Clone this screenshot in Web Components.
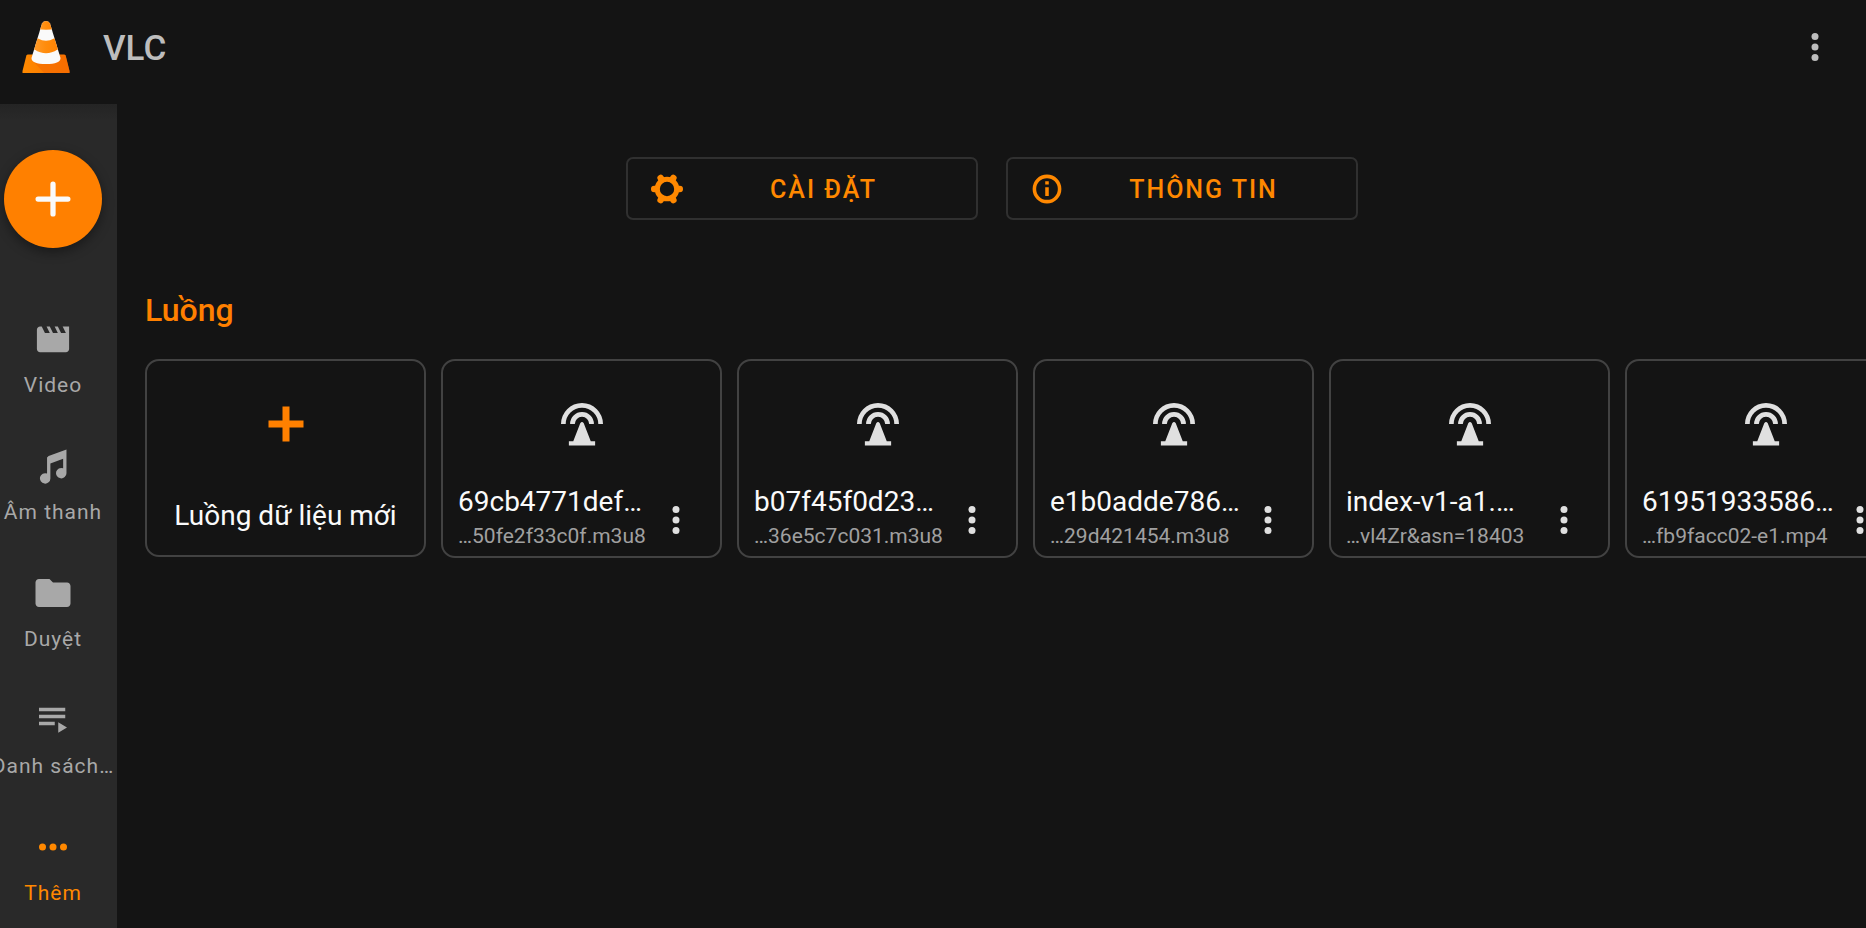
<!DOCTYPE html>
<html lang="vi">
<head>
<meta charset="utf-8">
<title>VLC</title>
<style>
  html, body { margin: 0; height: 100%; background: #141414; }
  body { font-family: Roboto, "Noto Sans", sans-serif; overflow: hidden; }
</style>
</head>
<body>
<vlc-app></vlc-app>
<script>
const ICONS = {
  dots: '<circle cx="12" cy="6" r="2"/><circle cx="12" cy="12" r="2"/><circle cx="12" cy="18" r="2"/>',
  more: '<circle cx="6" cy="12" r="2"/><circle cx="12" cy="12" r="2"/><circle cx="18" cy="12" r="2"/>',
  fab: '<path d="M12 3.500v17M3.500 12h17" fill="none" stroke="currentColor" stroke-width="3" stroke-linecap="round"/>',
  plus: '<path d="M10 2h4v8h8v4h-8v8h-4v-8H2v-4h8z"/>',
  video: '<path transform="translate(.96 1.2) scale(.92)" d="M18 4l2 4h-3l-2-4h-2l2 4h-3l-2-4H8l2 4H7L5 4H4c-1.100 0-2 .9-2 2v12c0 1.100.9 2 2 2h16c1.100 0 2-.9 2-2V4z"/>',
  audio: '<path d="M8.600 7.200v9.100a3 3 0 1 0 1.900 2.800V10.600l7.300-2.700v5.400a3 3 0 1 0 1.900 2.800V2.500L9.500 6.300z"/>',
  folder: '<path d="M10 4H4c-1.100 0-2 .9-2 2v12c0 1.100.9 2 2 2h16c1.100 0 2-.9 2-2V8c0-1.100-.9-2-2-2h-8z"/>',
  playlist: '<path d="M4 5h15v2H4zM4 9h15v2H4zM4 13h9v2H4zM15 13.300v6l5-3z"/>',
  gear: '<g fill="none" stroke="currentColor"><circle cx="12" cy="12" r="6.900" stroke-width="3.600"/><path stroke-width="4.600" stroke-linecap="round" d="M19.600 12h1.400M4.400 12H3M15.800 5.400l.7-1.200M8.200 5.400l-.7-1.200M15.800 18.600l.7 1.200M8.200 18.600l-.7 1.200"/></g>',
  info: '<g fill="none" stroke="currentColor" stroke-width="2.500"><circle cx="12" cy="12" r="8.900"/><path d="M12 6.500v2.400M12 10.700v6.300"/></g>',
  stream: '<path d="M0 12a12 12 0 0 1 24 0h-2.700a9.300 9.300 0 0 0-18.600 0zM5.200 12a6.800 6.800 0 0 1 13.600 0h-2.700a4.100 4.100 0 0 0-8.200 0zM11 11.500q1-1.200 2 0L17 21.900h2.500v2.400h-15v-2.400H7z"/>'
};

class VlcIcon extends HTMLElement {
  connectedCallback() {
    this.attachShadow({ mode: 'open' }).innerHTML = `
      <style>
        :host { display: block; width: 42px; height: 42px; flex: none; }
        svg { display: block; width: 100%; height: 100%; overflow: visible; }
      </style>
      <svg viewBox="0 0 24 24" fill="currentColor" aria-hidden="true">${ICONS[this.getAttribute('name')]}</svg>`;
  }
}
customElements.define('vlc-icon', VlcIcon);

class VlcCone extends HTMLElement {
  connectedCallback() {
    this.attachShadow({ mode: 'open' }).innerHTML = `
      <style>
        :host { display: block; width: 48px; height: 52px; }
        svg { display: block; width: 100%; height: 100%; }
      </style>
      <svg viewBox="0 0 48 52" role="img" aria-label="VLC">
        <defs>
          <linearGradient id="base" x1="0" x2="1"><stop offset="0" stop-color="#ff8a00"/><stop offset="1" stop-color="#f97000"/></linearGradient>
          <linearGradient id="band" x1="0" x2="1"><stop offset="0" stop-color="#ff9f33"/><stop offset=".5" stop-color="#ff8c0c"/><stop offset="1" stop-color="#ff7f00"/></linearGradient>
          <clipPath id="cone"><path d="M20 2.500Q21 0 24 0t4 2.500L38.500 37Q38.500 43 24 43T9.500 37z"/></clipPath>
        </defs>
        <path d="M6 33.500h36q1.200 0 1.600 1L47.500 50v2H.5v-2L4.400 34.500q.4-1 1.600-1z" fill="url(#base)"/>
        <path d="M11 40l11 12h25.500v-2L43.600 34.500z" fill="#f56c00" opacity=".65"/>
        <g clip-path="url(#cone)">
          <rect width="48" height="52" fill="#fafafa"/>
          <path d="M14 0h20v7.500q-10 2.500-20 0z" fill="url(#band)"/>
          <path d="M8 17.500h8q8 4.500 16 0h8v11h-4.500q-11.500 7.500-23 0H8z" fill="url(#band)"/>
        </g>
      </svg>`;
  }
}
customElements.define('vlc-cone', VlcCone);

class VlcBar extends HTMLElement {
  connectedCallback() {
    this.attachShadow({ mode: 'open' }).innerHTML = `
      <style>
        :host { display: block; }
        header { display: flex; align-items: center; height: 104px; box-sizing: border-box; padding: 0 30px 10px 22px; background: #141414; color: #bdbdbd; }
        h1 { flex: 1; margin: 0 0 0 33px; padding-top: 4px; font-size: 35px; line-height: 42px; font-weight: 500; }
        button { border: 0; padding: 0; background: none; color: inherit; }
      </style>
      <header>
        <vlc-cone></vlc-cone>
        <h1><slot></slot></h1>
        <button aria-label="Tùy chọn khác"><vlc-icon name="dots"></vlc-icon></button>
      </header>`;
  }
}
customElements.define('vlc-bar', VlcBar);

class VlcRail extends HTMLElement {
  connectedCallback() {
    this.attachShadow({ mode: 'open' }).innerHTML = `
      <style>
        :host { display: block; background: linear-gradient(#242424, #292929 16px); overflow: hidden; }
        nav { display: flex; flex-direction: column; align-items: center; width: 106px; padding-top: 46px; }
        button { width: 98px; height: 98px; margin-bottom: 47px; border: 0; border-radius: 50%; padding: 0; display: grid; place-items: center; background: #ff8000; color: #fafafa; box-shadow: 0 4px 12px #0006; }
      </style>
      <nav>
        <button aria-label="Thêm mới"><vlc-icon name="fab"></vlc-icon></button>
        <slot></slot>
      </nav>`;
  }
}
customElements.define('vlc-rail', VlcRail);

class VlcRailItem extends HTMLElement {
  connectedCallback() {
    this.attachShadow({ mode: 'open' }).innerHTML = `
      <style>
        :host { display: block; height: 127px; color: #a8a8a8; }
        :host([active]) { color: #ff8800; }
        a { display: flex; flex-direction: column; align-items: center; gap: 13px; padding-top: 23px; color: inherit; text-decoration: none; font-size: 21px; line-height: 24px; letter-spacing: 1px; white-space: nowrap; }
      </style>
      <a href="#"><vlc-icon name="${this.getAttribute('icon')}"></vlc-icon><span><slot></slot></span></a>`;
  }
}
customElements.define('vlc-rail-item', VlcRailItem);

class VlcAction extends HTMLElement {
  connectedCallback() {
    this.attachShadow({ mode: 'open' }).innerHTML = `
      <style>
        :host { display: block; flex: 0 1 352px; }
        button { display: flex; align-items: center; width: 100%; height: 63px; box-sizing: border-box; padding: 0 12px 0 22px; border: 2px solid #303030; border-radius: 7px; background: none; color: #ff8800; font: 500 25px/30px Roboto, "Noto Sans", sans-serif; letter-spacing: 2px; }
        vlc-icon { width: 34px; height: 34px; }
        span { flex: 1; padding-top: 2px; text-align: center; }
      </style>
      <button><vlc-icon name="${this.getAttribute('icon')}"></vlc-icon><span><slot></slot></span></button>`;
  }
}
customElements.define('vlc-action', VlcAction);

class VlcNewStream extends HTMLElement {
  connectedCallback() {
    this.attachShadow({ mode: 'open' }).innerHTML = `
      <style>
        :host { display: block; flex: 0 0 281px; }
        button { display: flex; flex-direction: column; align-items: center; width: 100%; height: 198px; box-sizing: border-box; padding: 42px 0 0; gap: 55px; border: 2px solid #424242; border-radius: 14px; background: none; color: #fafafa; font: 400 28px/32px Roboto, "Noto Sans", sans-serif; white-space: nowrap; }
        vlc-icon { color: #ff8000; }
      </style>
      <button><vlc-icon name="plus"></vlc-icon><span><slot></slot></span></button>`;
  }
}
customElements.define('vlc-new-stream', VlcNewStream);

class VlcStream extends HTMLElement {
  connectedCallback() {
    this.attachShadow({ mode: 'open' }).innerHTML = `
      <style>
        :host { display: block; flex: 0 0 281px; }
        article { display: flex; flex-direction: column; height: 199px; box-sizing: border-box; border: 2px solid #424242; border-radius: 14px; color: #fafafa; }
        article > vlc-icon { align-self: center; margin-top: 42px; color: #e0e0e0; }
        .row { display: flex; align-items: center; margin-top: 41px; padding-left: 15px; }
        .text { width: 197px; white-space: nowrap; }
        h3 { margin: 0; font-size: 28px; line-height: 32px; font-weight: 400; }
        p { margin: 0; padding-top: 5px; font-size: 21px; line-height: 26px; color: #a0a0a0; }
        button { border: 0; padding: 4px 0 0; background: none; color: #e0e0e0; }
      </style>
      <article>
        <vlc-icon name="stream"></vlc-icon>
        <div class="row">
          <div class="text"><h3><slot></slot></h3><p><slot name="url"></slot></p></div>
          <button aria-label="Tùy chọn"><vlc-icon name="dots"></vlc-icon></button>
        </div>
      </article>`;
  }
}
customElements.define('vlc-stream', VlcStream);

class VlcApp extends HTMLElement {
  connectedCallback() {
    this.attachShadow({ mode: 'open' }).innerHTML = `
      <style>
        :host { display: grid; grid-template: auto 1fr / 117px minmax(0, 1fr); height: 100vh; }
        vlc-bar { grid-column: 1 / -1; }
        main { overflow: hidden; }
        .actions { display: flex; justify-content: center; gap: 28px; padding-top: 53px; }
        h2 { margin: 72px 0 0 28px; font-size: 32px; line-height: 36px; font-weight: 500; color: #ff8000; }
        .streams { display: flex; align-items: flex-start; gap: 15px; margin: 31px 0 0 28px; }
      </style>
      <vlc-bar>VLC</vlc-bar>
      <vlc-rail>
        <vlc-rail-item icon="video">Video</vlc-rail-item>
        <vlc-rail-item icon="audio">Âm thanh</vlc-rail-item>
        <vlc-rail-item icon="folder">Duyệt</vlc-rail-item>
        <vlc-rail-item icon="playlist">Danh sách…</vlc-rail-item>
        <vlc-rail-item icon="more" active>Thêm</vlc-rail-item>
      </vlc-rail>
      <main>
        <div class="actions">
          <vlc-action icon="gear">CÀI ĐẶT</vlc-action>
          <vlc-action icon="info">THÔNG TIN</vlc-action>
        </div>
        <h2>Luồng</h2>
        <div class="streams">
          <vlc-new-stream>Luồng dữ liệu mới</vlc-new-stream>
          <vlc-stream>69cb4771def…<span slot="url">…50fe2f33c0f.m3u8</span></vlc-stream>
          <vlc-stream>b07f45f0d23…<span slot="url">…36e5c7c031.m3u8</span></vlc-stream>
          <vlc-stream>e1b0adde786…<span slot="url">…29d421454.m3u8</span></vlc-stream>
          <vlc-stream>index-v1-a1.…<span slot="url">…vl4Zr&amp;asn=18403</span></vlc-stream>
          <vlc-stream>61951933586…<span slot="url">…fb9facc02-e1.mp4</span></vlc-stream>
        </div>
      </main>`;
  }
}
customElements.define('vlc-app', VlcApp);
</script>
</body>
</html>
